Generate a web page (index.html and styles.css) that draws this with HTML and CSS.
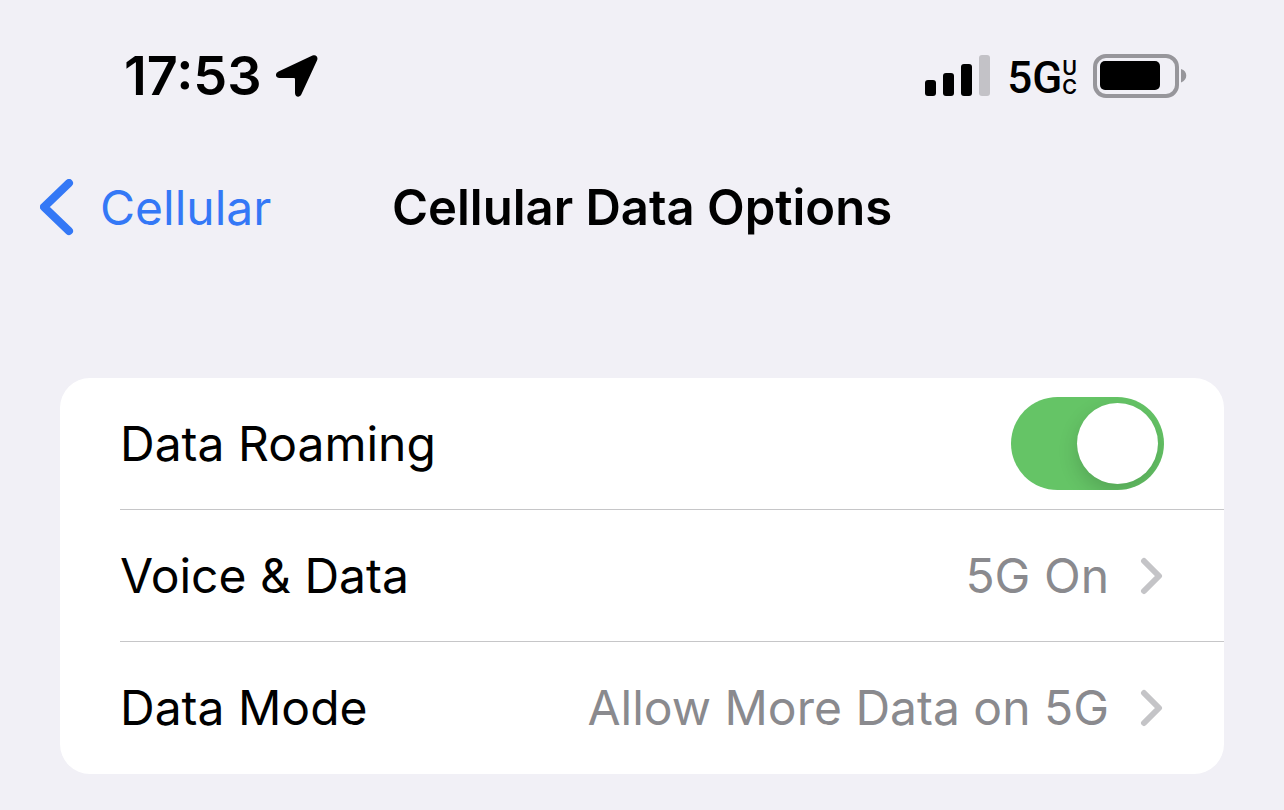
FILE: index.html
```html
<!DOCTYPE html>
<html lang="en">
<head>
<meta charset="utf-8">
<meta name="viewport" content="width=device-width, initial-scale=1">
<title>Cellular Data Options</title>
<link rel="stylesheet" href="styles.css">
</head>
<body>
<div class="status-bar">
  <div class="status-group">
    <time class="clock">17:53</time>
    <svg class="location" viewBox="0 0 42 42" aria-hidden="true"><path d="M36.500 .6 L2.500 16.500 C-1.500 18.500 -.5 23 3.500 23 L17.500 23 C18.600 23 19 23.400 19 24.500 L19 38 C19 42 23.500 43 25.300 39.500 L41 5.500 C42.500 2 40 -.9 36.500 .6 Z"/></svg>
  </div>
  <div class="status-group">
    <svg class="signal" viewBox="0 0 66 42" aria-hidden="true"><rect x="0" y="25" width="11" height="16" rx="3"/><rect x="18" y="18" width="11" height="23" rx="3"/><rect x="36" y="9" width="11" height="32" rx="3"/><rect class="faded" x="54" y="0" width="11" height="41" rx="3"/></svg>
    <span class="network">5G<span class="network-kind"><span>U</span><span>C</span></span></span>
    <svg class="battery" viewBox="0 0 95 44" aria-hidden="true"><rect class="shell" x="2" y="2" width="82" height="40" rx="11"/><rect x="7" y="7" width="60" height="29" rx="5"/><path class="cap" d="M88 15 C95 17 95 26 88 28.500 Z"/></svg>
  </div>
</div>
<header class="nav">
  <a class="back" href="#cellular"><svg class="back-icon" viewBox="0 0 34 58" aria-hidden="true"><path d="M29 4 L4 28 L29 52"/></svg>Cellular</a>
  <h1 class="title">Cellular Data Options</h1>
</header>
<main class="card">
  <div class="row">
    <label class="label" for="roaming">Data Roaming</label>
    <input class="switch" id="roaming" type="checkbox" role="switch" checked>
  </div>
  <a class="row" href="#voice"><span class="label">Voice &amp; Data</span><span class="value">5G On</span><svg class="chevron" viewBox="0 0 24 38" aria-hidden="true"><path d="M4 4 L19 19 L4 34"/></svg></a>
  <a class="row" href="#mode"><span class="label">Data Mode</span><span class="value">Allow More Data on 5G</span><svg class="chevron" viewBox="0 0 24 38" aria-hidden="true"><path d="M4 4 L19 19 L4 34"/></svg></a>
</main>
</body>
</html>
```
FILE: styles.css
```css
* { box-sizing: border-box; }
body {
  margin: 0;
  background: #f1f0f6;
  color: #000;
  font-family: Inter, "Liberation Sans", sans-serif;
  font-size: 48px;
  line-height: 60px;
}
a { color: inherit; text-decoration: none; }
svg { display: block; flex: none; }
.status-bar {
  display: flex;
  justify-content: space-between;
  align-items: center;
  padding: 44px 96px 0 124px;
}
.status-group { display: flex; align-items: center; }
.clock { font-size: 54px; font-weight: 600; }
.location { width: 42px; height: 42px; margin-left: 14px; }
.signal { width: 66px; height: 42px; }
.faded { fill: #c3c2c7; }
.network {
  display: flex;
  align-items: center;
  margin: 0 16px;
  padding-top: 4px;
  font-family: Roboto, sans-serif;
  font-size: 44px;
  font-weight: 500;
}
.network-kind {
  display: grid;
  font-family: Inter, sans-serif;
  font-size: 20px;
  font-weight: 600;
  line-height: 19px;
}
.battery { width: 95px; height: 44px; }
.shell { fill: none; stroke: #97969b; stroke-width: 4; }
.cap { fill: #97969b; }
.nav {
  display: grid;
  grid-template-columns: 1fr auto 1fr;
  align-items: center;
  padding: 70px 40px 0;
}
.back { display: flex; align-items: center; gap: 26px; color: #3478f6; }
.back-icon { width: 34px; height: 58px; }
.back-icon path { fill: none; stroke: #3478f6; stroke-width: 8; stroke-linecap: round; stroke-linejoin: round; }
.title { margin: 0; font-size: 49px; font-weight: 600; }
.card {
  margin: 140px 60px 36px;
  padding-left: 60px;
  border-radius: 30px;
  background: #fff;
}
.row {
  display: flex;
  align-items: center;
  min-height: 132px;
  padding-right: 60px;
}
.row:not(:last-child) { border-bottom: 1px solid #c6c6c8; }
.label { flex: 1; }
.value { color: #8a8a8e; }
.chevron { width: 24px; height: 38px; margin-left: 31px; }
.chevron path { fill: none; stroke: #c4c4c7; stroke-width: 6; stroke-linecap: round; stroke-linejoin: round; }
.switch {
  appearance: none;
  overflow: hidden;
  width: 153px;
  height: 93px;
  margin: 0;
  padding: 6px;
  border-radius: 47px;
  background: #e9e9ea;
}
.switch::before {
  content: "";
  display: block;
  width: 81px;
  height: 81px;
  border-radius: 50%;
  background: #fff;
  box-shadow: 0 8px 20px rgb(0 0 0 / 16%);
}
.switch:checked { background: #65c466; }
.switch:checked::before { margin-left: auto; }
```
